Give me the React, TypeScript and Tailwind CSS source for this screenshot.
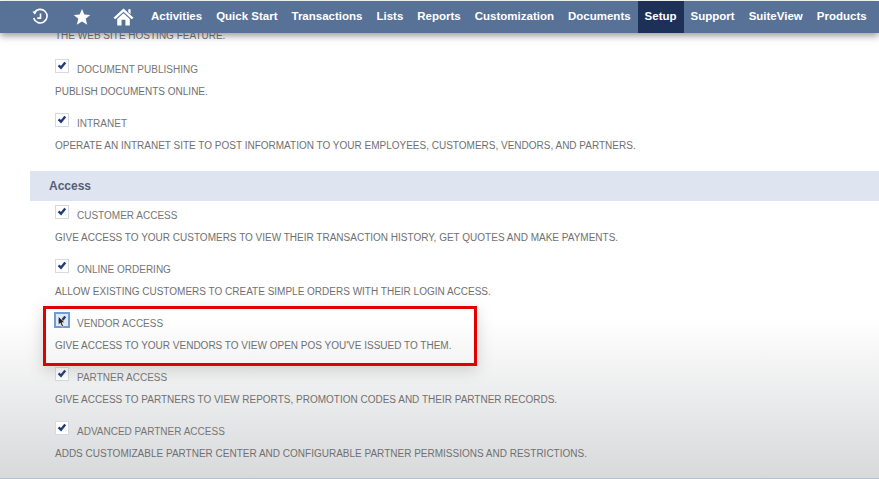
import React from "react";

const navItems = [
  "Activities",
  "Quick Start",
  "Transactions",
  "Lists",
  "Reports",
  "Customization",
  "Documents",
  "Setup",
  "Support",
  "SuiteView",
  "Products",
];

interface FeatureProps {
  label: string;
  text: string;
  focused?: boolean;
}

function Check() {
  return (
    <svg viewBox="0 0 14 14" className="w-[14px] h-[14px]">
      <path d="M3 6.4 L5.8 9 L10.8 2.8" fill="none" stroke="#1f3b7d" strokeWidth="2.8" />
    </svg>
  );
}

function Feature({ label, text, focused }: FeatureProps) {
  return (
    <div className="h-[54px]">
      <div className="flex items-start h-[26px]">
        <div
          className={
            focused
              ? "relative w-[16px] h-[16px] -ml-px -mt-px border-2 border-[#6f9bd8] bg-[#dfe8f5] flex items-center justify-center"
              : "w-[14px] h-[14px] border border-[#d5d9e2] bg-white flex items-center justify-center"
          }
        >
          <Check />
          {focused ? (
            <svg viewBox="0 0 12 16" className="absolute left-[1px] top-[1px] w-[10px] h-[14px]">
              <path
                d="M1.5 1 L1.5 11.5 L4 9.5 L6 14 L8 13 L6 8.8 L9.5 8.8 Z"
                fill="#222"
                stroke="#fff"
                strokeWidth="0.8"
              />
            </svg>
          ) : null}
        </div>
        <span className={focused ? "ml-[7px] mt-[4px] text-[10px] leading-[14px] text-[#757575]" : "ml-2 mt-[4px] text-[10px] leading-[14px] text-[#757575]"}>
          {label}
        </span>
      </div>
      <p className="text-[10px] leading-[14px] text-[#707070] whitespace-nowrap">{text}</p>
    </div>
  );
}

export default function App() {
  return (
    <div className="relative w-[879px] h-[479px] overflow-hidden bg-white font-['Liberation_Sans',Arial,sans-serif]">
      <header className="relative z-10 h-[32px] mt-px flex items-center bg-[#587197] shadow-[0_3px_7px_rgba(60,60,60,0.5)]">
        <div className="flex items-center w-[143px] shrink-0">
          <svg viewBox="0 0 20 20" className="ml-[31px] w-[19px] h-[19px]">
            <path
              d="M3.4 5.2 A7.2 7.2 0 1 1 2.8 10.5"
              fill="none"
              stroke="#fff"
              strokeWidth="1.7"
            />
            <path d="M1.5 3.6 L6.3 3.4 L4 7.2 Z" fill="#fff" />
            <path d="M10 5.8 V10.6 H6.6" fill="none" stroke="#fff" strokeWidth="1.7" />
          </svg>
          <svg viewBox="0 0 20 20" className="ml-[23px] w-[18px] h-[18px]">
            <path d="M10 1 L12.6 7.2 L19.2 7.7 L14.1 12 L15.8 18.6 L10 15 L4.2 18.6 L5.9 12 L0.8 7.7 L7.4 7.2 Z" fill="#fff" />
          </svg>
          <svg viewBox="0 0 22 20" className="ml-[22px] w-[21px] h-[20px]">
            <path d="M11 1 L21.5 10.8 L19.6 12.4 L11 4.6 L2.4 12.4 L0.5 10.8 Z" fill="#fff" />
            <path d="M16 2 H18.4 V7 L16 4.8 Z" fill="#fff" />
            <path fillRule="evenodd" d="M4.4 12 L11 6.2 L17.6 12 V19 H4.4 Z M9 13 V19 H13 V13 Z" fill="#fff" />
          </svg>
        </div>
        <nav className="flex items-center h-full ml-px">
          {navItems.map((item) => (
            <a
              key={item}
              className={
                item === "Setup"
                  ? "h-full flex items-center px-[7px] text-[11.5px] font-bold text-white bg-[#1d3057]"
                  : "h-full flex items-center px-[7px] text-[11.5px] font-bold text-white whitespace-nowrap"
              }
            >
              {item}
            </a>
          ))}
        </nav>
      </header>

      <main className="h-[446px] bg-gradient-to-b from-white from-[64%] to-[#d8d9db] border-b border-[#b5c0d6]">
        <div className="pl-[55px]">
          <p className="text-[10px] leading-[14px] text-[#707070] whitespace-nowrap h-[26px] -translate-y-[4px]">
            THE WEB SITE HOSTING FEATURE.
          </p>
          <Feature label="DOCUMENT PUBLISHING" text="PUBLISH DOCUMENTS ONLINE." />
          <Feature
            label="INTRANET"
            text="OPERATE AN INTRANET SITE TO POST INFORMATION TO YOUR EMPLOYEES, CUSTOMERS, VENDORS, AND PARTNERS."
          />
        </div>
        <div className="ml-[30px] mt-[4px] h-[30px] flex items-center pl-[19px] bg-[#dfe4f1] text-[12px] font-bold text-[#555e78]">
          Access
        </div>
        <div className="pl-[55px] pt-[4px]">
          <Feature
            label="CUSTOMER ACCESS"
            text="GIVE ACCESS TO YOUR CUSTOMERS TO VIEW THEIR TRANSACTION HISTORY, GET QUOTES AND MAKE PAYMENTS."
          />
          <Feature
            label="ONLINE ORDERING"
            text="ALLOW EXISTING CUSTOMERS TO CREATE SIMPLE ORDERS WITH THEIR LOGIN ACCESS."
          />
          <Feature
            focused
            label="VENDOR ACCESS"
            text="GIVE ACCESS TO YOUR VENDORS TO VIEW OPEN POS YOU'VE ISSUED TO THEM."
          />
          <Feature
            label="PARTNER ACCESS"
            text="GIVE ACCESS TO PARTNERS TO VIEW REPORTS, PROMOTION CODES AND THEIR PARTNER RECORDS."
          />
          <Feature
            label="ADVANCED PARTNER ACCESS"
            text="ADDS CUSTOMIZABLE PARTNER CENTER AND CONFIGURABLE PARTNER PERMISSIONS AND RESTRICTIONS."
          />
        </div>
      </main>

      {/* callout drawn over the page */}
      <div className="absolute left-[43px] top-[306px] w-[434px] h-[60px] border-[3px] border-[#e00000] shadow-[0_4px_14px_rgba(120,120,120,0.3)]" />
    </div>
  );
}
